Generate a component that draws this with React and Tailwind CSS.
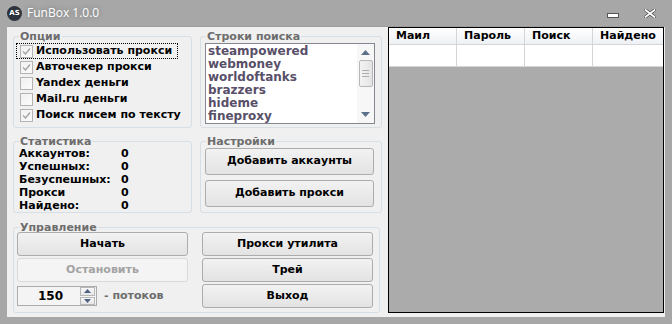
import React from "react";

const font = { fontFamily: '"DejaVu Sans", Verdana, sans-serif' };

function CheckBox({ checked }) {
  return (
    <div className="w-[13px] h-[13px] border border-[#b4b4b4] bg-gradient-to-br from-[#f0f0f0] to-[#fbfbfb] flex items-center justify-center shrink-0">
      {checked && (
        <svg width="9" height="9" viewBox="0 0 9 9">
          <path d="M1 4.5 L3.5 7 L8 1.5" fill="none" stroke="#a3a3a3" strokeWidth="1.4" />
        </svg>
      )}
    </div>
  );
}

function Btn({ children, disabled, className = "" }) {
  return (
    <div
      className={
        "flex items-center justify-center rounded-[3px] border text-[11px] font-bold " +
        (disabled
          ? "border-[#d9d9d9] bg-[#f4f4f4] text-[#a3a3a3] "
          : "border-[#acacac] bg-gradient-to-b from-[#f2f2f2] to-[#e3e3e3] text-black ") +
        className
      }
    >
      {children}
    </div>
  );
}

function Group({ title, className = "", children }) {
  return (
    <fieldset className={"border border-[#d5dfe5] rounded-[3px] " + className}>
      <legend className="ml-[5px] px-px text-[11px] leading-[13px] font-bold text-[#6d6d6d]">{title}</legend>
      {children}
    </fieldset>
  );
}

const options = [
  ["Использовать прокси", true],
  ["Авточекер прокси", true],
  ["Yandex деньги", false],
  ["Mail.ru деньги", false],
  ["Поиск писем по тексту", true],
];

const searchLines = ["steampowered", "webmoney", "worldoftanks", "brazzers", "hideme", "fineproxy"];

const stats = [
  ["Аккаунтов:", "0"],
  ["Успешных:", "0"],
  ["Безуспешных:", "0"],
  ["Прокси", "0"],
  ["Найдено:", "0"],
];

export default function App() {
  return (
    <div className="w-[672px] h-[324px] bg-[#a7a7a7] flex flex-col overflow-hidden" style={font}>
      {/* title bar */}
      <div className="h-[26px] flex items-center shrink-0">
        <div className="ml-[7px] w-[15px] h-[15px] rounded-full bg-[#2d323c] flex items-center justify-center text-[7px] font-bold text-white leading-none">
          AS
        </div>
        <span
          className="ml-[5px] text-[12px] text-white [text-shadow:0_0_5px_rgba(0,0,0,0.35)]"
          style={{ fontFamily: '"Open Sans", sans-serif' }}
        >
          FunBox 1.0.0
        </span>
        <div className="ml-auto flex items-center">
          <svg width="12" height="5" viewBox="0 0 12 5" className="mt-[4px]">
            <rect x="0.5" y="0.5" width="11" height="4" fill="#fff" stroke="#555" />
          </svg>
          <svg width="12" height="9" viewBox="0 0 12 9" className="ml-[25px] mr-[16px]">
            <path d="M1.5 1 L10.5 8 M10.5 1 L1.5 8" stroke="#555" strokeWidth="3.2" strokeLinecap="square" />
            <path d="M1.5 1 L10.5 8 M10.5 1 L1.5 8" stroke="#fff" strokeWidth="1.6" strokeLinecap="square" />
          </svg>
        </div>
      </div>

      {/* client */}
      <div className="mx-[7px] mb-[7px] flex-1 bg-[#f0f0f0] border-t border-[#9c9c9c] flex">
        <div className="w-[381px] flex flex-col pl-[6px] pt-[3px]">
          {/* row 1 */}
          <div className="flex gap-[8px]">
            <Group title="Опции" className="w-[179px] h-[98px]">
              <div className="flex flex-col">
                {options.map(([label, checked], i) => (
                  <div
                    key={label}
                    className={
                      "ml-[2px] w-[162px] h-[16px] flex items-center pl-[3px] gap-[3px] border " +
                      (i === 0 ? "border-dotted border-black" : "border-transparent")
                    }
                  >
                    <CheckBox checked={checked} />
                    <span className="text-[11px] font-bold text-black whitespace-nowrap">{label}</span>
                  </div>
                ))}
              </div>
            </Group>
            <Group title="Строки поиска" className="w-[182px] h-[98px]">
              <div className="ml-[4px] w-[170px] h-[81px] border border-[#828790] bg-white flex overflow-hidden">
                <div className="flex-1 flex flex-col pl-[2px] pt-px">
                  {searchLines.map((s) => (
                    <div key={s} className="h-[13px] leading-[13px] text-[12px] font-bold text-[#584f68]">
                      {s}
                    </div>
                  ))}
                </div>
                <div className="w-[17px] bg-[#f7f7f7] flex flex-col items-center">
                  <svg width="9" height="5" viewBox="0 0 9 5" className="mt-[6px]">
                    <path d="M0 5 L4.5 0 L9 5 Z" fill="#5d7089" />
                  </svg>
                  <div className="mt-[5px] w-[14px] h-[27px] rounded-[2px] border border-[#b7b7b7] bg-gradient-to-r from-[#f3f3f3] to-[#e4e4e4] flex flex-col items-center justify-center gap-[2px]">
                    <div className="w-[7px] h-px bg-[#b0b0b0]" />
                    <div className="w-[7px] h-px bg-[#b0b0b0]" />
                    <div className="w-[7px] h-px bg-[#b0b0b0]" />
                  </div>
                  <svg width="9" height="5" viewBox="0 0 9 5" className="mt-auto mb-[6px]">
                    <path d="M0 0 L4.5 5 L9 0 Z" fill="#5d7089" />
                  </svg>
                </div>
              </div>
            </Group>
          </div>

          {/* row 2 */}
          <div className="flex gap-[8px] mt-[7px]">
            <Group title="Статистика" className="w-[179px] h-[78px]">
              <div className="flex flex-col pl-[5px] -mt-[1px]">
                {stats.map(([k, v]) => (
                  <div key={k} className="h-[13px] leading-[13px] flex items-center text-[11px] font-bold text-black">
                    <span className="w-[102px]">{k}</span>
                    <span>{v}</span>
                  </div>
                ))}
              </div>
            </Group>
            <Group title="Настройки" className="w-[182px] h-[78px]">
              <div className="flex flex-col gap-[5px] ml-[4px] w-[169px]">
                <Btn className="h-[27px]">Добавить аккаунты</Btn>
                <Btn className="h-[27px]">Добавить прокси</Btn>
              </div>
            </Group>
          </div>

          {/* row 3 */}
          <Group title="Управление" className="w-[367px] h-[92px] mt-[8px]">
            <div className="flex gap-[14px] ml-[3px] -mt-[2px]">
              <div className="w-[171px] flex flex-col gap-[2px]">
                <Btn className="h-[24px]">Начать</Btn>
                <Btn disabled className="h-[24px]">Остановить</Btn>
                <div className="mt-[2px] flex items-center">
                  <div className="w-[80px] h-[20px] border border-[#acacac] bg-[#f4f4f4] flex items-center">
                    <span className="flex-1 text-center text-[12px] font-bold text-black pl-[3px]">150</span>
                    <div className="w-[15px] h-[18px] mr-px flex flex-col gap-px">
                      <div className="flex-1 border border-[#b8b8b8] bg-gradient-to-b from-[#f7f7f7] to-[#e6e6e6] flex items-center justify-center">
                        <svg width="7" height="4" viewBox="0 0 7 4">
                          <path d="M0 4 L3.5 0 L7 4 Z" fill="#4d6185" />
                        </svg>
                      </div>
                      <div className="flex-1 border border-[#b8b8b8] bg-gradient-to-b from-[#f7f7f7] to-[#e6e6e6] flex items-center justify-center">
                        <svg width="7" height="4" viewBox="0 0 7 4">
                          <path d="M0 0 L3.5 4 L7 0 Z" fill="#4d6185" />
                        </svg>
                      </div>
                    </div>
                  </div>
                  <span className="ml-[7px] text-[11px] font-bold text-[#6d6d6d]">- потоков</span>
                </div>
              </div>
              <div className="w-[171px] flex flex-col gap-[2px]">
                <Btn className="h-[24px]">Прокси утилита</Btn>
                <Btn className="h-[24px]">Трей</Btn>
                <Btn className="h-[24px]">Выход</Btn>
              </div>
            </div>
          </Group>
        </div>

        {/* grid */}
        <div className="w-[276px] mb-[4px] border border-black bg-[#ababab] flex flex-col overflow-hidden">
          <div className="h-[17px] flex bg-gradient-to-b from-white to-[#eef1f5] border-b border-[#d5d5d5]">
            {["Маил", "Пароль", "Поиск", "Найдено"].map((h, i) => (
              <div
                key={h}
                className={
                  "flex items-center pl-[7px] text-[11px] font-bold text-black border-r border-[#d5d5d5] " +
                  (i === 3 ? "flex-1 border-r-0" : "w-[68px]")
                }
              >
                {h}
              </div>
            ))}
          </div>
          <div className="h-[22px] flex bg-white border-b border-[#d5d5d5]">
            {[0, 1, 2, 3].map((i) => (
              <div key={i} className={"border-r border-[#d5d5d5] " + (i === 3 ? "flex-1 border-r-0" : "w-[68px]")} />
            ))}
          </div>
        </div>
      </div>
    </div>
  );
}
